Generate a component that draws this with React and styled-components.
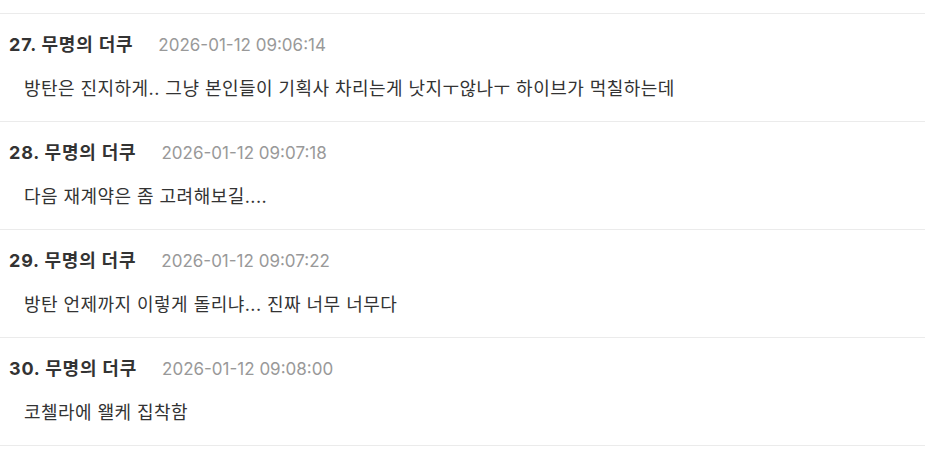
import React from 'react'
import styled, { createGlobalStyle } from 'styled-components'

const GlobalStyle = createGlobalStyle`
  html, body {
    margin: 0;
    padding: 0;
    background: #fff;
  }
  body {
    font-family: Inter, "Noto Sans CJK KR", sans-serif;
    color: #333;
  }
`

const comments = [
  { no: 27, name: '무명의 더쿠', date: '2026-01-12 09:06:14', text: '방탄은 진지하게.. 그냥 본인들이 기획사 차리는게 낫지ㅜ않나ㅜ 하이브가 먹칠하는데' },
  { no: 28, name: '무명의 더쿠', date: '2026-01-12 09:07:18', text: '다음 재계약은 좀 고려해보길....' },
  { no: 29, name: '무명의 더쿠', date: '2026-01-12 09:07:22', text: '방탄 언제까지 이렇게 돌리냐... 진짜 너무 너무다' },
  { no: 30, name: '무명의 더쿠', date: '2026-01-12 09:08:00', text: '코첼라에 왤케 집착함' },
]

const List = styled.ul`
  list-style: none;
  margin: 0;
  padding: 13px 0 0 0;
`

const Item = styled.li`
  border-top: 1px solid #ebebeb;
  padding: 19px 0 20px 9px;
  &:last-child {
    border-bottom: 1px solid #ebebeb;
  }
`

const Header = styled.div`
  display: flex;
  align-items: center;
  gap: 25px;
  line-height: 24px;
  margin-bottom: 20px;
`

const Name = styled.span`
  font-size: 18px;
  font-weight: 700;
  letter-spacing: 0.8px;
  color: #333;
`

const Date = styled.span`
  font-size: 17px;
  color: #999;
`

const Body = styled.div`
  font-size: 18px;
  line-height: 24px;
  letter-spacing: 0.45px;
  color: #333;
  padding-left: 15px;
`

export default function App() {
  return (
    <>
      <GlobalStyle />
      <List>
        {comments.map(c => (
          <Item key={c.no}>
            <Header>
              <Name>{c.no}. {c.name}</Name>
              <Date>{c.date}</Date>
            </Header>
            <Body>{c.text}</Body>
          </Item>
        ))}
      </List>
    </>
  )
}
